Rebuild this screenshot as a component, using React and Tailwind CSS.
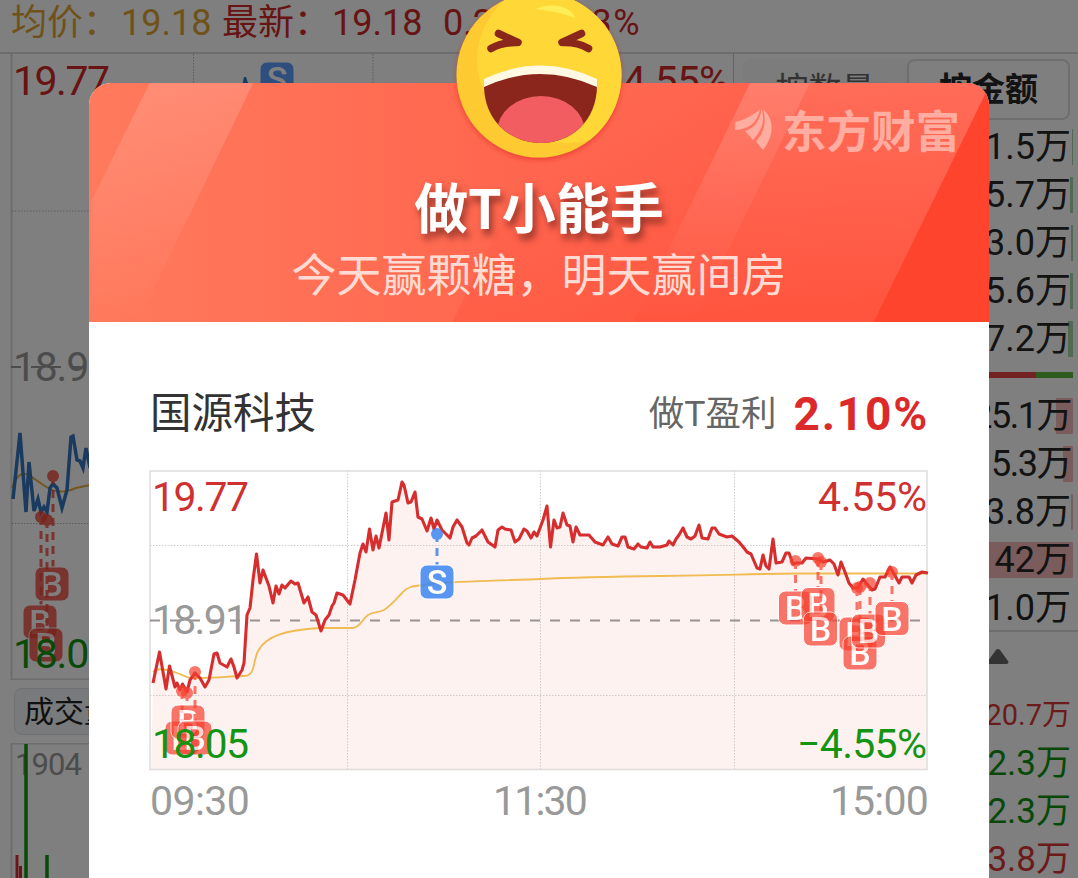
const TEXT_FONT = "font-['Roboto','Noto_Sans_CJK_SC',sans-serif]";
const CJK_FONT = "font-['Noto_Sans_CJK_SC',sans-serif]";

const priceLine =
  "153,683 159.5,652 166,689 169.5,666 175,687 177,683 180,690 182.5,684 187,692 190,680 195,673 200,678 205,687 209,680 214,654 217,653 220,663 227,667 231,659 234,667 237,678 242,670 244,663 247,615 250,608 253,580 256.5,554 260,583 263,570 269,586 273,603 276,586 279,594 282,585 285,588 291,581 295,584 298,583 304,603 308,597 312,612 316,615 321,631 325,620 329,615 332,606 334,603 337,593 343,595 350,604 355,580 360,553 363,544 366,552 369.5,529 373,550 376,536 379,548 386,513 389,540 392,502 398,500 402,482 404,485 408,503 411,502 415,492 418,517 422,519 427,531 431,518 434,529 437,520 442,530 450,538 453,527 457,520 462,527 467,543 469,545 472,538 476,536 482,530 488,542 495,547 498,530 502,527 505,529 511,530 515,542 519,539 524,529 527,531 531,538 534,532 537,536 543,520 547,506 550.5,547 554,520 557,528 560,527 563,513 567,525 570,526 573,542 576,527 580,535 589,535 595,542 603,545 608,537 612,544 618,546 622,537 625,537 628,547 634,549 638,544 641,547 647,548 650,542 653,547 660,547 667,545 669,541 673,545 676,539 679,535 683,528 687,537 691,539 695,536 699,525 702,538 708,539 712,528 715,528 719,534 727,537 732,536 739,542 744,548 747,552 751,554 757,568 760,569 763,555 766,566 769,569 773,539 776,563 782,562 786,553 789,553 793,564 796,563 802,563 806,558 818,559 823,562 830,560 834,564 838,575 841,562 845,572 849,583 853,588 858,588 863,579 867,584 872,590 875,589 880,577 885,577 890,567 893,572 899,583 902,577 909,577 912,583 916,575 922,572 928,573";

const averageLine =
  "M153 672C157 668 164 668 177 673S185 678 200 678C220 678 230 676 243 676S252 664 258 651C266 636 285 630 320 628L352 628C360 628 362 619 368 615S378 613 384 610C392 605 398 597 402 593S406 588 412 586.500L437 583C480 580.500 520 580 540 579S580 577 660 576S740 574 800 573.500H927";

const buyMarkers = [
  { x: 182, y: 738, dotX: 182, dotY: 691 },
  { x: 188, y: 722, dotX: 187, dotY: 693 },
  { x: 195, y: 738, dotX: 195, dotY: 672 },
  { x: 795.5, y: 608, dotX: 795.5, dotY: 561 },
  { x: 818, y: 604.5, dotX: 818, dotY: 558 },
  { x: 820.5, y: 629, dotX: 821, dotY: 562 },
  { x: 856, y: 634, dotX: 857, dotY: 588 },
  { x: 860, y: 653, dotX: 860, dotY: 587 },
  { x: 868.5, y: 631, dotX: 870, dotY: 583 },
  { x: 892, y: 618.5, dotX: 892, dotY: 572 },
];

const dimBuyMarkers = [
  { x: 52, y: 584, dotX: 53, dotY: 476 },
  { x: 40, y: 622, dotX: 41, dotY: 517 },
  { x: 46, y: 645, dotX: 47, dotY: 520 },
];

const sellRows = [
  { value: "1.5万", bar: 1 },
  { value: "5.7万", bar: 3 },
  { value: "3.0万", bar: 2 },
  { value: "5.6万", bar: 3 },
  { value: "7.2万", bar: 5 },
];

const buyRows = [
  { value: "25.1万", bar: 17, tracking: "tracking-[-1.500px]" },
  { value: "5.3万", bar: 10, tracking: "tracking-[-1.500px]" },
  { value: "3.8万", bar: 2 },
  { value: "42万", bar: 100 },
  { value: "1.0万", bar: 0 },
];

const trades = [
  { value: "20.7万", className: "text-[29px] text-[#d93636]" },
  { value: "2.3万", className: "text-[35px] text-[#109010]" },
  { value: "2.3万", className: "text-[35px] text-[#109010]" },
  { value: "3.8万", className: "text-[35px] text-[#d93636]" },
];

function Marker({ letter, x, y, dotX, dotY, color, opacity }) {
  return (
    <g opacity={opacity}>
      <circle cx={dotX} cy={dotY} r="6" fill={color} />
      <line x1={dotX} x2={dotX} y1={dotY} y2={y - 17} stroke={color} strokeWidth="3" strokeDasharray="8 6" />
      <rect x={x - 17} y={y - 17} width="34" height="34" rx="7" fill={color} stroke="#fff" strokeWidth="1" />
      <text x={x} y={y + 12} textAnchor="middle" fontSize="34" fontWeight="500" fill="#fff">
        {letter}
      </text>
    </g>
  );
}

function Label({ x, y, width, color, children }) {
  return (
    <text x={x} y={y} fontSize="41" fill={color} textLength={width} lengthAdjust="spacing">
      {children}
    </text>
  );
}

function ProfitChart() {
  return (
    <svg viewBox="149 470 780 301" className={`block h-[301px] w-[780px] ${TEXT_FONT}`}>
      <polygon points={`151,769 ${priceLine} 927,769`} fill="#fef2f1" />
      <g stroke="#cfcaca" strokeWidth="1" strokeDasharray="1.500 1.500">
        <path d="M347.500 471V769M540.500 471V769M734.500 471V769M150 545.500H927M150 695.500H927" />
      </g>
      <rect x="150" y="471" width="777" height="298.500" fill="none" stroke="#dedbdb" strokeWidth="1.500" />
      <line x1="150" x2="927" y1="620.500" y2="620.500" stroke="#999292" strokeWidth="2" strokeDasharray="10 10" />
      <path d={averageLine} fill="none" stroke="#f0bb50" strokeWidth="1.800" />
      <polyline points={priceLine} fill="none" stroke="#d62e2e" strokeWidth="3.100" strokeLinejoin="round" />
      {buyMarkers.map((m) => (
        <Marker key={`${m.x}-${m.y}`} letter="B" color="#f6402f" opacity="0.700" {...m} />
      ))}
      <Marker letter="S" x={437} y={582} dotX={437} dotY={534} color="#3c86f2" opacity="0.850" />
      <Label x={152} y={511} width={97} color="#cf3030">19.77</Label>
      <Label x={152} y={634} width={96} color="#999">18.91</Label>
      <Label x={152} y={758} width={97} color="#139413">18.05</Label>
      <Label x={818} y={511} width={109} color="#cf3030">4.55%</Label>
      <Label x={797} y={758} width={130} color="#139413">−4.55%</Label>
    </svg>
  );
}

function MarketChart() {
  return (
    <svg viewBox="0 54 733 626" className={`block h-[626px] w-[733px] ${TEXT_FONT}`}>
      <path d="M11.500 54V679.500H733" fill="none" stroke="#dadada" strokeWidth="2" />
      <path
        d="M193.500 54V679M373 54V679M553 54V679M12 211H733M12 523.500H733"
        stroke="#b5b5b5"
        strokeDasharray="1.500 1.500"
        fill="none"
      />
      <path d="M11 367H733" stroke="#999" strokeWidth="2" strokeDasharray="10 10" />
      <path d="M12 488C16 477 20 472 26 474S38 482 48 488S70 491 76 488L90 485" fill="none" stroke="#e7ae42" strokeWidth="2" />
      <polyline
        points="13,499 20,433 26,512 29,462 34,511 38,499 41,512 44,507 47,512 50,488 53,484 57,488 62,508 67,490 71,437 73,436 77,460 80,461 83,468 86,448 90,468"
        fill="none"
        stroke="#3576be"
        strokeWidth="3.500"
      />
      <path d="M242 86L244 77H246L249 86Z" fill="#3576be" />
      <Marker letter="S" x={277} y={79} dotX={277} dotY={79} color="#5d9dfb" opacity="1" />
      {dimBuyMarkers.map((m) => (
        <Marker key={m.y} letter="B" color="#f04438" opacity="0.800" {...m} />
      ))}
      <Label x={13} y={95} width={97} color="#d02828">19.77</Label>
      <Label x={623} y={95} width={106} color="#d02828">4.55%</Label>
      <Label x={13} y={381} width={98} color="#999">18.91</Label>
      <Label x={13} y={668} width={98} color="#139413">18.05</Label>
    </svg>
  );
}

function DepthRow({ value, bar, color, tracking = "" }) {
  return (
    <div className="relative flex h-[48px] items-center justify-end pr-[7px]">
      <span className={`absolute right-[5px] h-[36px] ${color}`} style={{ width: bar }} />
      <span className={`relative ${tracking}`}>{value}</span>
    </div>
  );
}

function MarketPage() {
  return (
    <div className={`flex h-full flex-col bg-white ${TEXT_FONT}`}>
      <div className="flex h-[54px] shrink-0 items-center whitespace-pre border-b-2 border-[#dadada] pb-[6px] pl-[11px] text-[36px]">
        <span className="w-[110px] text-[#dda535]">均价：</span>
        <span className="w-[101px] text-[#dda535]">19.18</span>
        <span className="w-[110px] text-[#cf2929]">最新：</span>
        <span className="w-[111px] text-[#cf2929]">19.18</span>
        <span className="w-[94px] text-[#cf2929]">0.27</span>
        <span className="tracking-[1.500px] text-[#cf2929]">1.43%</span>
      </div>
      <div className="flex min-h-0 flex-1">
        <div className="w-[734px] shrink-0 border-r border-[#c4c7cc]">
          <MarketChart />
          <div className="ml-[14px] mt-[8px] flex h-[47px] w-[150px] items-center rounded-lg border border-[#dde0e6] bg-[#f1f4f9] pl-[9px] text-[30px] text-[#222]">
            成交量
          </div>
          <svg viewBox="0 743 733 135" className="mt-[8px] block h-[135px] w-[733px]">
            <path d="M11.500 878V743.500H733" fill="none" stroke="#dadada" strokeWidth="2" />
            <text x="15" y="775" fontSize="31" fill="#999" textLength="67">1904</text>
            <path d="M26 744V878M47 855V878" stroke="#139413" strokeWidth="3.500" />
            <path d="M17 855V878M20.500 866V878" stroke="#d62e2e" strokeWidth="3" />
          </svg>
        </div>
        <div className="flex flex-1 flex-col text-[36px] text-[#262626]">
          <div className="ml-[9px] mt-[5px] flex h-[61px] w-[327px] shrink-0 rounded-lg bg-[#f8f8f8] text-[33px]">
            <div className="flex flex-1 items-center justify-center text-[#666]">按数量</div>
            <div className="flex w-[163px] items-center justify-center rounded-lg border-2 border-[#ddd] bg-white font-bold">
              按金额
            </div>
          </div>
          <div className="mt-[3px] shrink-0">
            {sellRows.map((row) => (
              <DepthRow key={row.value} color="bg-[#a4d3a4]" {...row} />
            ))}
          </div>
          <div className="mt-[9px] mr-[5px] flex h-[6px] shrink-0">
            <div className="flex-1 bg-[#e84343]" />
            <div className="w-[37px] bg-[#5cb83c]" />
          </div>
          <div className="mt-[14px] shrink-0">
            {buyRows.map((row) => (
              <DepthRow key={row.value} color="bg-[#f6b9b9]" {...row} />
            ))}
          </div>
          <div className="-mt-[2px] flex h-[62px] shrink-0 border-t-2 border-[#dadada] pl-[253px] pt-[17px]">
            <svg viewBox="0 0 22 15" className="h-[15px] w-[22px]">
              <path d="M9 1Q11 -1 13 1L21 12Q22 14 20 15H2Q0 14 1 12Z" fill="#666" />
            </svg>
          </div>
          {trades.map((trade, i) => (
            <div key={i} className={`flex h-[48px] shrink-0 items-center justify-end pr-[7px] ${trade.className}`}>
              {trade.value}
            </div>
          ))}
        </div>
      </div>
    </div>
  );
}

function LaughingFace() {
  return (
    <svg viewBox="450 -14 180 180" className="absolute left-[361px] top-[-97px] h-[180px] w-[180px]">
      <defs>
        <filter id="faceShadow" x="-10%" y="-10%" width="120%" height="120%">
          <feDropShadow dx="0" dy="2" stdDeviation="2.500" floodColor="#d9281b" floodOpacity="0.600" />
        </filter>
        <clipPath id="mouth">
          <path d="M484 83Q541 58 597 83C598 121 571 143 541 143S483 121 484 83Z" />
        </clipPath>
        <clipPath id="face">
          <circle cx="539" cy="75" r="82.500" />
        </clipPath>
      </defs>
      <circle cx="539" cy="75" r="82.500" fill="#fdca30" filter="url(#faceShadow)" />
      <g clipPath="url(#face)">
        <ellipse cx="567" cy="60" rx="90" ry="83" fill="#ffd736" />
      </g>
      <path d="M536 9C550 2 572 6 575 18C560 12 549 11 536 9Z" fill="#ffed55" />
      <g fill="none" stroke="#8a261c" strokeWidth="7.500" strokeLinecap="round" strokeLinejoin="round">
        <path d="M498.500 33.500L518 42.500Q502 42 491 48.500" />
        <path d="M581.500 33.500L562 42.500Q578 42 588.500 48.500" />
      </g>
      <g clipPath="url(#mouth)">
        <rect x="480" y="60" width="120" height="90" fill="#8a261c" />
        <ellipse cx="541" cy="132" rx="44" ry="36" fill="#f15d60" />
      </g>
      <path d="M484 79Q540 52 597 79V87Q540 61 484 87Z" fill="#fff8e3" />
    </svg>
  );
}

function BrandMark() {
  return (
    <div className={`absolute right-[29px] top-[15px] flex items-center text-[#ffada0] ${CJK_FONT}`}>
      <svg viewBox="732 108 40 44" className="mr-[9px] h-[44px] w-[40px]" fill="currentColor">
        <path d="M734 131L734.500 123C744 121 752 116 759 110.500C756 124 748 130 734 131Z" />
        <path d="M744 132C754 129 759 121 760.500 110.500C764 120 762 130 752 141Z" />
        <path d="M762 110.500C773 119 774 136 762 151L755 142.500C764 132 765.500 122 762 110.500Z" />
      </svg>
      <span className="text-[44.500px] leading-[62px] font-bold">东方财富</span>
    </div>
  );
}

function HeaderStripes() {
  return (
    <svg viewBox="89 83 900 240" className="absolute inset-0 h-full w-full">
      <defs>
        <linearGradient id="fade" x1="0" y1="0" x2="0" y2="1">
          <stop offset="0" stopColor="#fff" stopOpacity="0.160" />
          <stop offset="1" stopColor="#fff" stopOpacity="0" />
        </linearGradient>
        <linearGradient id="warm" x1="0" y1="0" x2="0" y2="1">
          <stop offset="0" stopColor="#ff705c" />
          <stop offset="1" stopColor="#ff543e" />
        </linearGradient>
      </defs>
      <path d="M875 323L989 90V323Z" fill="#ff442e" />
      <path d="M570 83H989V90L875 323H452Z" fill="url(#warm)" opacity="0.500" />
      <path d="M751 83H989V90L875 323H634Z" fill="url(#warm)" opacity="0.800" />
      <path d="M148 83H252L136 323H89V203Z" fill="url(#fade)" />
      <path d="M751 83H811L694 323H634Z" fill="url(#fade)" opacity="0.700" />
    </svg>
  );
}

function ResultCard() {
  return (
    <div className="absolute left-[89px] top-[83px] h-[795px] w-[900px] rounded-t-[22px] bg-white">
      <div className="relative h-[239px] overflow-hidden rounded-t-[22px] bg-linear-to-r from-[#ff7a5d] via-[#ff654d] to-[#ff422d]">
        <HeaderStripes />
        <BrandMark />
        <div className={`relative flex flex-col items-center pt-[91px] ${CJK_FONT}`}>
          <h1 className="text-[54px] leading-[64px] font-bold text-white [text-shadow:3px_6px_7px_#682018b0]">
            做T小能手
          </h1>
          <p className="mt-[3px] text-[45px] leading-[64px] text-[#ffdbd3]">今天赢颗糖，明天赢间房</p>
        </div>
      </div>
      <LaughingFace />
      <div className={`flex h-[148px] items-center pl-[61px] pr-[60px] pt-[37px] ${TEXT_FONT}`}>
        <span className="text-[41.500px] text-[#333]">国源科技</span>
        <span className="ml-auto text-[35.500px] text-[#666]">做T盈利</span>
        <span className="ml-[17px] text-[46px] font-bold tracking-[1.800px] text-[#dc2a2a]">2.10%</span>
      </div>
      <div className="ml-[60px]">
        <ProfitChart />
      </div>
      <div className={`mx-[61px] flex justify-between text-[41px] text-[#999] ${TEXT_FONT}`}>
        <span className="tracking-[-0.600px]">09:30</span>
        <span className="tracking-[-1.800px]">11:30</span>
        <span className="tracking-[-0.800px]">15:00</span>
      </div>
    </div>
  );
}

export default function App() {
  return (
    <div className="relative h-[878px] w-[1078px] overflow-hidden">
      <MarketPage />
      <div className="absolute inset-0 bg-black/50" />
      <ResultCard />
    </div>
  );
}
